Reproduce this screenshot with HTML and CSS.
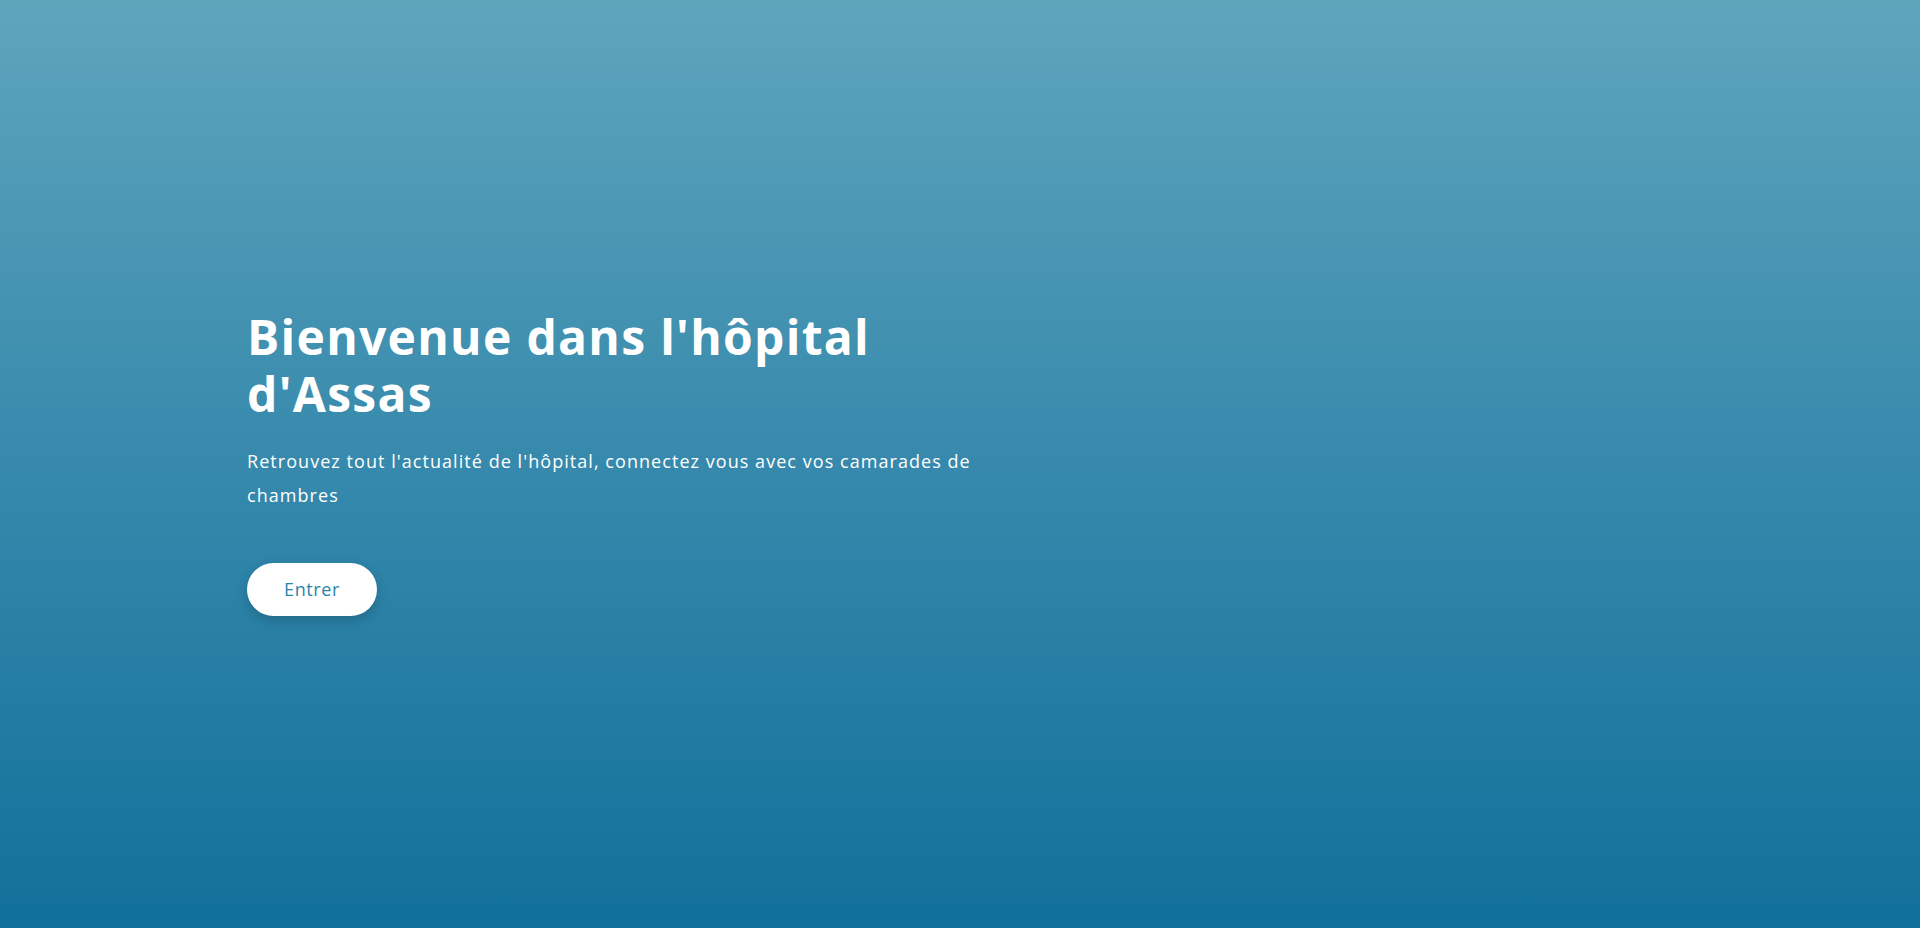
FILE: index.html
```html
<!DOCTYPE html>
<html lang="fr">
<head>
<meta charset="utf-8">
<title>Hôpital d'Assas</title>
<link rel="stylesheet" href="styles.css">
</head>
<body>
<main class="hero">
  <div class="hero-content">
    <h1 class="hero-title">Bienvenue dans l'hôpital<br>d'Assas</h1>
    <p class="hero-text">Retrouvez tout l'actualité de l'hôpital, connectez vous avec vos camarades de chambres</p>
    <a class="hero-btn" href="#">Entrer</a>
  </div>
</main>
</body>
</html>
```
FILE: styles.css
```css
* { box-sizing: border-box; }
html, body { margin: 0; padding: 0; height: 100%; }
body {
  font-family: "Open Sans", "Noto Sans", sans-serif;
  color: #fff;
}
.hero {
  height: 928px;
  background: linear-gradient(to bottom, #5fa5bc 0%, #3a8cae 45%, #11709a 100%);
  display: flex;
  align-items: center;
  padding: 0 0 4px 247px;
}
.hero-content {
  width: 790px;
}
.hero-title {
  margin: 0;
  font-size: 48px;
  font-weight: 700;
  line-height: 57px;
  letter-spacing: 1.3px;
}
.hero-text {
  margin: 22px 0 0;
  font-size: 18px;
  line-height: 34px;
  font-weight: 400;
  letter-spacing: 1.05px;
}
.hero-btn {
  display: inline-block;
  margin-top: 51px;
  background: #fff;
  color: #2b84aa;
  text-decoration: none;
  font-size: 18px;
  letter-spacing: 0.6px;
  line-height: 53px;
  height: 53px;
  width: 130px;
  text-align: center;
  border-radius: 27px;
  box-shadow: 0 5px 12px rgba(0, 0, 0, 0.18);
}
```
